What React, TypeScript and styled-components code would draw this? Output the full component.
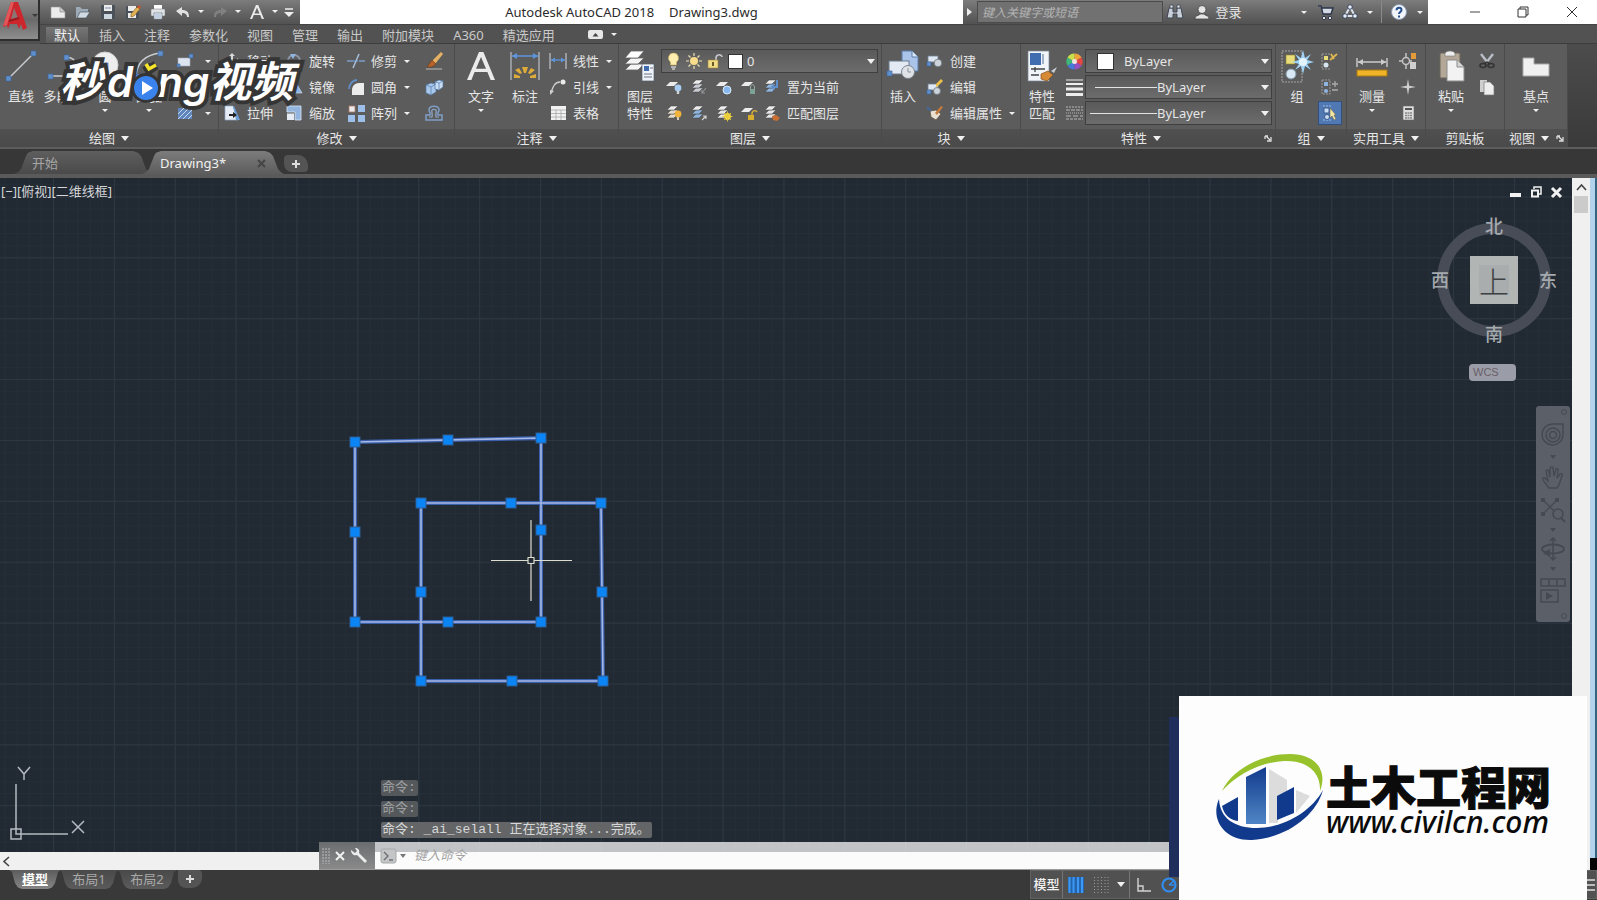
import React from "react";
import styled, { createGlobalStyle } from "styled-components";

const UI = `"Noto Sans", "Noto Sans CJK SC", sans-serif`;

const GlobalStyle = createGlobalStyle`
  *, *::before, *::after { box-sizing: border-box; }
  html, body { margin: 0; padding: 0; }
  body { background: #3a3a3a; color: #e6e6e6; font-family: ${UI}; font-size: 13px; line-height: 17px; overflow: hidden; }
  button, input, select { font: inherit; color: inherit; margin: 0; padding: 0; border: 0; background: none; border-radius: 0; }
  svg { display: block; flex: none; overflow: visible; }
`;

/* ---------- page frame ---------- */

const Page = styled.div`
  position: relative;
  display: flex;
  flex-direction: column;
  min-height: 100vh;
`;

const Header = styled.header`
  display: grid;
  grid-template-columns: 40px minmax(0, 1fr);
  grid-template-rows: 24px 20px;
  background: #505050;
`;

const AppButton = styled.button`
  grid-row: 1 / span 2;
  height: 41px;
  display: flex;
  align-items: center;
  gap: 3px;
  padding: 0 0 8px 2px;
  background: linear-gradient(#8c8c8c, #6a6a6a 50%, #8e8e8e);
  border-right: 2px solid #2e2e2e;
  border-bottom: 2px solid #2e2e2e;
`;

const TitleBar = styled.div`
  display: flex;
  background: #ffffff;
`;

const metal = `linear-gradient(#7c7c7c, #6a6a6a 40%, #525252)`;

const QuickAccess = styled.div`
  display: flex;
  flex: none;
  width: 260px;
  padding-left: 5px;
  background: ${metal};
`;

const BarButton = styled.button<{ $w: number }>`
  display: flex;
  align-items: center;
  justify-content: center;
  width: ${(p) => p.$w}px;
  height: 23px;
`;

const WindowTitle = styled.h1`
  flex: 1;
  margin: 0;
  display: flex;
  justify-content: center;
  align-items: center;
  gap: 15px;
  color: #2b2b2b;
  font-size: 13px;
  font-weight: 400;
  white-space: nowrap;
`;

const InfoCenter = styled.div`
  display: flex;
  align-items: center;
  flex: none;
  width: 465px;
  background: ${metal};
`;

const SearchInput = styled.input`
  width: 187px;
  height: 22px;
  padding: 0 4px;
  background: #717171;
  border: 1px solid #4b4b4b;
  font-size: 12px;
  font-style: italic;
  &::placeholder { color: #b4b4b4; opacity: 1; }
`;

const SignIn = styled.button`
  display: flex;
  align-items: center;
  gap: 6px;
  width: 110px;
  padding-left: 7px;
  height: 23px;
`;

const BarDivider = styled.span`
  width: 1px;
  height: 22px;
  margin: 0 4px;
  background: #8a8a8a;
`;

const WindowControls = styled.div`
  display: flex;
  flex: none;
  width: 169px;
  padding-left: 23px;
`;

const Tabs = styled.nav`
  display: flex;
  gap: 3px;
  padding: 2px 0 0 6px;
  background: #525252;
  border-bottom: 1px solid #3d3d3d;
  border-top: 1px solid #444444;
`;

const Tab = styled.button<{ $active?: boolean }>`
  padding: 0 8px;
  height: 16px;
  line-height: 16px;
  white-space: nowrap;
  color: ${(p) => (p.$active ? "#f2f2f2" : "#c9c9c9")};
  background: ${(p) => (p.$active ? "linear-gradient(#767676, #5e5e5e)" : "none")};
`;

const TabExtra = styled.button`
  display: flex;
  align-items: center;
  gap: 8px;
  margin-left: 22px;
  height: 15px;
`;

/* ---------- ribbon ---------- */

const Ribbon = styled.section`
  display: flex;
  height: 105px;
  background: linear-gradient(#4c4c4c, #3a3a3a);
  border-bottom: 2px solid #5d5d5d;
`;

const Panel = styled.div<{ $w: number }>`
  display: flex;
  flex-direction: column;
  flex: none;
  width: ${(p) => p.$w}px;
  background: #5c5c5c;
  border-right: 1px solid #4b4b4b;
`;

const PanelBody = styled.div<{ $inset?: number }>`
  display: flex;
  flex: none;
  height: 85px;
  padding: 4px 0 0 ${(p) => p.$inset ?? 0}px;
`;

const PanelTitle = styled.div<{ $launcher?: boolean }>`
  position: relative;
  display: flex;
  align-items: center;
  justify-content: center;
  gap: 6px;
  height: 18px;
  padding-right: ${(p) => (p.$launcher ? 14 : 0)}px;
  background: linear-gradient(#505050, #4a4a4a);
`;

const Launcher = styled.button`
  position: absolute;
  right: 3px;
  top: 6px;
`;

const BigButton = styled.button<{ $w?: number }>`
  display: flex;
  flex-direction: column;
  align-items: center;
  flex: none;
  width: ${(p) => p.$w ?? 42}px;
  padding-top: 2px;
  white-space: pre-line;
  text-align: center;
`;

const BigLabel = styled.span`
  padding-top: 6px;
`;

const BigCaret = styled.span`
  padding-top: 4px;
`;

const Column = styled.div<{ $gapLeft?: number }>`
  display: flex;
  flex-direction: column;
  flex: none;
  margin-left: ${(p) => p.$gapLeft ?? 0}px;
`;

const ToolRow = styled.div`
  display: flex;
  align-items: center;
  height: 26px;
`;

const Tool = styled.button<{ $on?: boolean }>`
  display: flex;
  align-items: center;
  gap: 4px;
  height: 24px;
  white-space: nowrap;
  background: ${(p) => (p.$on ? "#5079b4" : "none")};
  box-shadow: ${(p) => (p.$on ? "inset 0 0 0 1px #33507c" : "none")};
`;

const ToolIcon = styled.span<{ $w?: number }>`
  display: flex;
  justify-content: center;
  flex: none;
  width: ${(p) => p.$w ?? 22}px;
`;

const CaretButton = styled.button`
  display: flex;
  justify-content: center;
  width: 12px;
  margin-left: 4px;
  padding: 8px 0;
`;

const CaretMark = styled.span<{ $big?: boolean; $dark?: boolean }>`
  display: block;
  width: 0;
  height: 0;
  border: solid transparent;
  border-width: ${(p) => (p.$big ? "5px 4px 0" : "3px 3px 0")};
  border-top-color: ${(p) => (p.$dark ? "#3a3a3a" : "#f0f0f0")};
`;

const Combo = styled.label<{ $w: number }>`
  position: relative;
  display: block;
  width: ${(p) => p.$w}px;
  height: 24px;
  background: linear-gradient(#5a5a5a, #6c6c6c);
  border: 1px solid #3f3f3f;
`;

const ComboSelect = styled.select<{ $text: number }>`
  appearance: none;
  width: 100%;
  height: 22px;
  padding-left: ${(p) => p.$text}px;
  outline: none;
`;

const ComboArt = styled.span<{ $left: number }>`
  position: absolute;
  left: ${(p) => p.$left}px;
  top: 0;
  height: 22px;
  display: flex;
  align-items: center;
  gap: 5px;
  pointer-events: none;
`;

const ComboCaret = styled.span`
  position: absolute;
  right: 2px;
  top: 9px;
  pointer-events: none;
`;

const Swatch = styled.span<{ $s: number }>`
  width: ${(p) => p.$s}px;
  height: ${(p) => p.$s}px;
  background: #ffffff;
  border: 1px solid #333333;
`;

const Rule = styled.span<{ $w: number }>`
  width: ${(p) => p.$w}px;
  height: 1px;
  background: #e4e4e4;
`;

/* ---------- document tabs ---------- */

const DocTabs = styled.nav`
  display: flex;
  align-items: flex-end;
  height: 29px;
  padding-left: 14px;
  background: #373737;
  border-bottom: 4px solid #5a5a5a;
`;

const DocTab = styled.div<{ $active?: boolean }>`
  display: flex;
  align-items: center;
  justify-content: space-between;
  width: ${(p) => (p.$active ? 142 : 138)}px;
  height: 23px;
  margin-left: ${(p) => (p.$active ? -10 : 0)}px;
  padding: 2px 18px 0 18px;
  color: ${(p) => (p.$active ? "#f2f2f2" : "#a6a6a6")};
  background: ${(p) => (p.$active ? "linear-gradient(#7c7c7c, #5c5c5c)" : "linear-gradient(#5e5e5e, #4a4a4a)")};
  clip-path: polygon(0 100%, 4px 92%, 7px 78%, 12px 22%, 14px 8%, 19px 0, calc(100% - 19px) 0, calc(100% - 14px) 8%, calc(100% - 11px) 22%, calc(100% - 6px) 78%, calc(100% - 3px) 92%, 100% 100%);
`;

const AddTab = styled.button<{ $flip?: boolean }>`
  display: flex;
  align-items: center;
  justify-content: center;
  width: 24px;
  height: ${(p) => (p.$flip ? 18 : 17)}px;
  margin-bottom: ${(p) => (p.$flip ? 0 : 2)}px;
  margin-left: ${(p) => (p.$flip ? 3 : 0)}px;
  background: #545454;
  border-radius: ${(p) => (p.$flip ? "0 4px 10px 8px" : "4px 10px 4px 8px")};
`;

/* ---------- workspace ---------- */

const Workspace = styled.main`
  position: relative;
  display: flex;
  flex: 1;
  min-height: 480px;
`;

const Stage = styled.div`
  display: flex;
  flex-direction: column;
  flex: 1;
  min-width: 0;
`;

const Canvas = styled.div`
  position: relative;
  flex: 1;
  background: #212932;
  overflow: hidden;
`;

const Drawing = styled.svg`
  position: absolute;
  inset: 0;
  width: 100%;
  height: 100%;
`;

const ViewLabel = styled.div`
  position: relative;
  display: flex;
  padding: 5px 0 0 1px;
  color: #d4d6d8;
`;

const Ucs = styled.svg`
  position: absolute;
  left: 10px;
  bottom: 12px;
`;

const ViewportControls = styled.div`
  position: absolute;
  top: 8px;
  right: 10px;
  display: flex;
  gap: 9px;
`;

const Compass = styled.div`
  position: absolute;
  top: 37px;
  right: 14px;
  width: 128px;
  height: 130px;
  display: grid;
  grid-template-columns: 20px 1fr 20px;
  grid-template-rows: 22px 1fr 22px;
  place-items: center;
  color: #a5aaaf;
  font-size: 18px;
  line-height: 22px;
`;

const Ring = styled.span`
  position: absolute;
  left: 7px;
  top: 8px;
  width: 114px;
  height: 114px;
  border: 11px solid #474c56;
  border-radius: 50%;
`;

const Heading = styled.span<{ $area: string }>`
  position: relative;
  grid-area: ${(p) => p.$area};
  font-weight: 500;
`;

const TopFace = styled.button`
  position: relative;
  grid-area: 2 / 2;
  width: 48px;
  height: 48px;
  background: #a9adad;
  box-shadow: inset 0 0 0 9px #b1b5b4;
  color: #3e4143;
  font-size: 30px;
  font-family: "Noto Sans CJK SC", sans-serif;
  font-weight: 300;
  line-height: 44px;
`;

const WcsButton = styled.button`
  position: absolute;
  top: 186px;
  right: 56px;
  width: 47px;
  height: 17px;
  padding-left: 4px;
  display: flex;
  align-items: center;
  border-radius: 4px;
  background: #9a9da8;
  color: #6b6069;
  font-family: "Liberation Sans", sans-serif;
  font-size: 11px;
`;

const NavBar = styled.div`
  position: absolute;
  top: 228px;
  right: 2px;
  width: 34px;
  height: 216px;
  padding-top: 12px;
  display: flex;
  flex-direction: column;
  align-items: center;
  border-radius: 3px;
  background: #5a5f68;
`;

const NavButton = styled.button<{ $h: number }>`
  display: flex;
  align-items: center;
  justify-content: center;
  width: 34px;
  height: ${(p) => p.$h}px;
`;

const NavDot = styled.span<{ $end?: boolean }>`
  position: absolute;
  right: 3px;
  ${(p) => (p.$end ? "bottom: 3px;" : "top: 3px;")}
  width: 6px;
  height: 6px;
  border: 1px solid #464a52;
  border-radius: 50%;
`;

const History = styled.div`
  position: absolute;
  left: 381px;
  bottom: 14px;
  display: flex;
  flex-direction: column;
  align-items: flex-start;
  gap: 5px;
  font-family: "Liberation Mono", "Noto Sans CJK SC", monospace;
`;

const HistoryLine = styled.div<{ $dim?: boolean }>`
  height: 16px;
  line-height: 15px;
  padding: 0 2px 0 1px;
  border-radius: 2px;
  white-space: pre;
  background: ${(p) => (p.$dim ? "#55585a" : "#636566")};
  color: ${(p) => (p.$dim ? "#9da0a2" : "#d6d7d8")};
`;

const HScroll = styled.div`
  display: flex;
  align-items: center;
  height: 18px;
  padding-left: 3px;
  background: #f0f0f0;
`;

const VScroll = styled.div`
  display: flex;
  flex-direction: column;
  align-items: center;
  width: 18px;
  background: #f0f0f0;
`;

const VThumb = styled.span`
  width: 14px;
  height: 17px;
  background: #cbcbcb;
`;

const ScrollButton = styled.button`
  display: flex;
  align-items: center;
  justify-content: center;
  height: 18px;
`;

const WindowEdge = styled.span`
  width: 7px;
  background: linear-gradient(90deg, #b3d3ec 5px, #34647f 5px);
  border-bottom: 12px solid #050505;
`;

const CommandBar = styled.form`
  position: absolute;
  left: 319px;
  right: 26px;
  bottom: 0;
  height: 28px;
  display: flex;
  background: rgba(255, 255, 255, 0.72);
  border-bottom: 1px solid #9a9a9a;
`;

const CommandTools = styled.div`
  display: flex;
  align-items: center;
  width: 56px;
  padding-left: 3px;
  gap: 5px;
  background: linear-gradient(#6a6d6f, #8a8a8a);
`;

const Prompt = styled.button`
  display: flex;
  align-items: center;
  gap: 4px;
  padding-left: 6px;
`;

const CommandInput = styled.input`
  flex: 1;
  padding-left: 8px;
  font-style: italic;
  outline: none;
  &::placeholder { color: #a3a3a3; opacity: 1; }
`;

/* ---------- status bar ---------- */

const StatusBar = styled.footer`
  display: flex;
  align-items: flex-start;
  height: 30px;
  padding-left: 9px;
  background: #393939;
`;

const LayoutTab = styled.button<{ $active?: boolean }>`
  width: ${(p) => (p.$active ? 52 : 60)}px;
  height: 19px;
  margin-right: -2px;
  line-height: 17px;
  font-weight: ${(p) => (p.$active ? 700 : 400)};
  text-decoration: ${(p) => (p.$active ? "underline" : "none")};
  color: ${(p) => (p.$active ? "#ffffff" : "#a9a9a9")};
  background: ${(p) => (p.$active ? "linear-gradient(#5c5c5c, #858585)" : "linear-gradient(#494949, #5b5b5b)")};
  clip-path: polygon(0 0, 3px 10%, 6px 70%, 9px 92%, 13px 100%, calc(100% - 13px) 100%, calc(100% - 9px) 92%, calc(100% - 6px) 70%, calc(100% - 3px) 10%, 100% 0);
`;

const StatusTools = styled.div`
  display: flex;
  align-items: center;
  width: 567px;
  height: 29px;
  margin-left: auto;
  background: #515151;
  border: 1px solid #626262;
`;

const StatusButton = styled.button<{ $w: number; $divide?: boolean }>`
  display: flex;
  align-items: center;
  justify-content: center;
  width: ${(p) => p.$w}px;
  height: 27px;
  color: #f2f2f2;
  font-weight: 500;
  border-right: ${(p) => (p.$divide ? "1px solid #757575" : "0")};
`;

const StatusMenu = styled(StatusButton)`
  margin-left: auto;
`;

/* ---------- overlaid marks ---------- */

const VideoMark = styled.div`
  position: absolute;
  left: 60px;
  top: 55px;
  display: flex;
  align-items: flex-start;
  font-family: "Noto Sans CJK SC", sans-serif;
  font-size: 42px;
  font-weight: 700;
  font-style: italic;
  line-height: 48px;
  color: #ffffff;
  -webkit-text-stroke: 8px #353535;
  paint-order: stroke fill;
  pointer-events: none;
`;

const MarkLead = styled.span`
  margin-right: 5px;
`;

const MarkLatin = styled.span`
  padding-top: 3px;
  font-family: "Inter", sans-serif;
  font-size: 42px;
  font-weight: 600;
`;

const MarkPlay = styled.svg`
  position: relative;
  z-index: 1;
`;

const SiteCard = styled.aside`
  position: absolute;
  right: 10px;
  bottom: 0;
  width: 408px;
  height: 204px;
  display: flex;
  align-items: center;
  padding-left: 35px;
  gap: 2px;
  background: #fdfdfd;
  color: #0b0b0b;
`;

const SiteShadow = styled.span`
  position: absolute;
  right: 418px;
  bottom: 23px;
  width: 10px;
  height: 160px;
  background: #202e5c;
`;

const SiteText = styled.div`
  display: flex;
  flex-direction: column;
  padding-top: 3px;
  white-space: nowrap;
`;

const SiteName = styled.strong`
  font-family: "Noto Sans CJK SC", sans-serif;
  font-size: 45px;
  font-weight: 900;
  font-style: oblique 6deg;
  line-height: 44px;
  -webkit-text-stroke: 1px #0b0b0b;
`;

const SiteUrl = styled.a`
  font-size: 30px;
  font-style: italic;
  font-weight: 500;
  line-height: 28px;
  color: inherit;
  text-decoration: none;
`;

/* ---------- icons ---------- */

type IconProps = { children: React.ReactNode; s?: number; h?: number };
const Icon = ({ children, s = 16, h }: IconProps) => (
  <svg width={s} height={h ?? s} viewBox={`0 0 ${s} ${h ?? s}`} fill="none" aria-hidden="true">
    {children}
  </svg>
);

const W = "#ececec";
const B = "#8fb4e0";
const grip = (x: number, y: number, s = 5) => (
  <rect x={x} y={y} width={s} height={s} fill="#5f8fcb" stroke="#3d659b" strokeWidth=".6" />
);

const Plus = () => <Icon s={10}><path d="M5 1v8M1 5h8" stroke="#dddddd" strokeWidth="2" /></Icon>;
const Cross = ({ c = "#e8e8e8", s = 10, w = 2 }: { c?: string; s?: number; w?: number }) => (
  <Icon s={s}><path d={`M1 1L${s - 1} ${s - 1}M${s - 1} 1L1 ${s - 1}`} stroke={c} strokeWidth={w} /></Icon>
);
const LauncherIcon = () => <Icon s={7}><path d="M0 1h3M0 1v3M1 1l4 4M6 2v4H2" stroke="#dedede" strokeWidth="1.300" /></Icon>;

const LogoA = () => (
  <svg width="27" height="30" viewBox="0 0 27 30" aria-hidden="true">
    <path d="M9 1h7l9 26-4 2-2-6-2 5-2-5H8l-2 5-1-4-3 2-1-1z" fill="#cb272d" />
    <path d="M9 1h3L5 24l-4 1z" fill="#e2565a" />
    <path d="M12 7l4 10-7 1z" fill="#8d7474" />
    <path d="M7 20l10-3" stroke="#9a1a20" strokeWidth="2" />
  </svg>
);

const NewFile = () => <Icon><path d="M1 3h9l5 5v6H1z" fill={W} stroke="#999" strokeWidth=".6" /><path d="M10 3v5h5" fill="#c9c9c9" stroke="#888" strokeWidth=".6" /></Icon>;
const OpenFile = () => <Icon><path d="M1 3h4l2 2h6v3H5l-3 6H1z" fill="#9dabb8" /><path d="M5 8h10l-4 6H2z" fill="#cfdae4" stroke="#3f474e" strokeWidth=".6" /></Icon>;
const SaveFile = () => <Icon><rect x="1" y="1" width="14" height="14" rx="1" fill="#4b5158" /><rect x="4" y="1" width="8" height="6" fill={W} /><rect x="4" y="10" width="8" height="5" fill="#cdd7e0" /><path d="M5 4h6" stroke="#7a8fae" /></Icon>;
const SaveAs = () => <Icon><rect x="1" y="2" width="13" height="13" rx="1" fill="#4b5158" /><rect x="3" y="2" width="8" height="5" fill={W} /><rect x="3" y="9" width="8" height="5" fill={W} /><path d="M6 10l6-7 3 2-6 7-3 1z" fill="#e1b256" stroke="#7c5a1c" strokeWidth=".6" /><path d="M12 3l2-2 2 2-1 2z" fill="#c8532d" /></Icon>;
const Print = () => <Icon><rect x="4" y="1" width="8" height="5" fill="#fff" /><rect x="1" y="5" width="14" height="7" rx="1" fill="#dfe3e6" stroke="#777" strokeWidth=".5" /><rect x="4" y="9" width="8" height="6" fill="#fff" stroke="#708090" strokeWidth=".8" /><path d="M5 11h6M5 13h6" stroke="#6488b6" strokeWidth=".8" /></Icon>;
const Undo = ({ off }: { off?: boolean }) => (
  <Icon><g transform={off ? "matrix(-1 0 0 1 16 0)" : undefined}><path d="M1 7l6-4v3c5 0 7 2 7 7h-2c0-3-2-4-5-4v3z" fill={off ? "#808080" : "#e2e2e2"} /></g></Icon>
);
const StyleA = ({ s = 16 }: { s?: number }) => (
  <svg width={s} height={s} viewBox="0 0 16 16" aria-hidden="true"><path d="M7 1h2.200L15 15h-2.200L11.200 11H4.800L3.200 15H1zM8 3.500L5.500 9.400h5z" fill="#ebebeb" fillRule="evenodd" /></svg>
);
const MoreIcon = () => <Icon s={10}><path d="M1 2h8" stroke="#eee" strokeWidth="1.500" /><path d="M0 5h10l-5 5z" fill="#eee" /></Icon>;
const Binoculars = () => <Icon><path d="M2 4h4v4h4V4h4l2 10h-6v-4H6v4H0z" fill="#c9cfd9" stroke="#3d4452" strokeWidth="1" /><path d="M3 1h3v3H3zM10 1h3v3h-3z" fill="#e7eaf0" stroke="#3d4452" strokeWidth=".8" /></Icon>;
const User = () => <Icon><circle cx="8" cy="5.500" r="4" fill="#e4e4e4" stroke="#444" strokeWidth=".8" /><path d="M1 15c0-4 4-3 5-5h4c1 2 5 1 5 5z" fill="#e4e4e4" stroke="#444" strokeWidth=".8" /></Icon>;
const Cart = () => <Icon><path d="M1 2h3l2 8h8l2-6H5" fill="#d3dae6" stroke="#2b3448" strokeWidth="1.400" /><circle cx="7" cy="14" r="1.600" fill="#fff" stroke="#2b3448" /><circle cx="13" cy="14" r="1.600" fill="#fff" stroke="#2b3448" /></Icon>;
const A360 = () => <Icon><path d="M8 3L3 12h10z" stroke="#dbe4f0" strokeWidth="2" /><circle cx="8" cy="3" r="2.300" fill="#e8eef7" stroke="#36445e" /><circle cx="3" cy="12" r="2.300" fill="#e8eef7" stroke="#36445e" /><circle cx="13" cy="12" r="2.300" fill="#e8eef7" stroke="#36445e" /></Icon>;
const Help = () => <Icon><circle cx="8" cy="8" r="7.500" fill="#f2f5fa" stroke="#8c9bb2" /><path d="M5.500 6.200c0-3.400 5-3.200 5-.2 0 2-2.500 2-2.500 4M8 11.500v2" stroke="#27508f" strokeWidth="2" /></Icon>;
const RibbonToggle = () => <Icon s={15} h={9}><rect width="15" height="9" rx="2" fill="#e8e8e8" /><path d="M4.500 6.500l3-3.500 3 3.500z" fill="#444" /></Icon>;
const MinIcon = () => <Icon s={12}><path d="M1 6h10" stroke="#444" strokeWidth="1" /></Icon>;
const RestoreIcon = () => <Icon s={12}><path d="M3 3V1h8v8H9M1 3h8v8H1z" stroke="#333" /></Icon>;

const LineIcon = () => <Icon s={32}><path d="M4 28L28 4" stroke="#c9ccd0" strokeWidth="1.500" />{grip(1, 26)}{grip(26, 1)}</Icon>;
const PolyIcon = () => <Icon s={32}><path d="M4 26h24C34 12 24 6 20 8" stroke="#c9ccd0" strokeWidth="1.500" />{grip(1, 24)}{grip(17, 5)}</Icon>;
const CircleIcon = () => <Icon s={32}><circle cx="16" cy="15" r="13" fill="#eeeeee" stroke="#cfcfcf" />{grip(14, 13)}</Icon>;
const ArcIcon = () => <Icon s={32}><path d="M3 26C4 12 12 5 27 3" stroke="#c9ccd0" strokeWidth="1.500" />{grip(25, 1)}{grip(1, 24)}</Icon>;
const RectIcon = () => <Icon><rect x="1" y="5" width="12" height="8" fill="#dbe4ef" stroke="#aab" strokeWidth=".6" />{grip(12, 1, 4)}{grip(0, 11, 3)}</Icon>;
const EllipseIcon = () => <Icon><ellipse cx="8" cy="8" rx="7" ry="4" stroke="#d8d8d8" />{grip(6, 6, 4)}</Icon>;
const HatchIcon = () => <Icon><rect x="1" y="3" width="14" height="11" fill="#5f86bd" /><path d="M1 9l6-6M1 14L12 3M6 14l9-9M11 14l4-4" stroke="#c8dbf3" /></Icon>;

const MoveIcon = () => <Icon><path d="M8 0l3 3H9v4h4V5l3 3-3 3V9H9v4h2l-3 3-3-3h2V9H3v2L0 8l3-3v2h4V3H5z" fill="#d9d9d9" /></Icon>;
const RotateIcon = () => <Icon><circle cx="8" cy="8" r="6" stroke="#8a94a3" strokeWidth="2" /><path d="M4 1h6L7 6z" fill={B} /></Icon>;
const TrimIcon = () => <Icon s={18}><path d="M0 9h6M12 9h6" stroke="#7f9dc4" strokeWidth="1.500" /><path d="M6 9h5" stroke="#5f8fcb" strokeWidth="1.500" strokeDasharray="2 1" /><path d="M6 16L12 2" stroke="#a9bfdb" strokeWidth="1.500" /></Icon>;
const EraseIcon = () => <Icon s={18}><path d="M1 17h16" stroke="#9c9c9c" strokeWidth="1.500" /><path d="M16 0l2 2-8 10-3-3z" fill="#e7b264" /><path d="M7 8l4 4-4 3-5 0z" fill="#b5632b" stroke="#6d3512" strokeWidth=".6" /></Icon>;
const CopyIcon = () => <Icon><circle cx="6" cy="6" r="4" stroke={W} /><circle cx="10" cy="10" r="4" stroke={B} /></Icon>;
const MirrorIcon = () => <Icon><path d="M6 2v12H0z" fill="#7d8794" /><path d="M9 2v12h7z" fill={B} stroke="#dceafb" strokeWidth=".6" /></Icon>;
const FilletIcon = () => <Icon s={17}><path d="M4 16V11c0-4 3-7 7-7h5v12z" fill={W} /><path d="M1 10c0-5 4-9 8-9" stroke="#5f8fcb" strokeWidth="1.800" /></Icon>;
const ExplodeIcon = () => <Icon s={18}><path d="M1 7l5-2 5 1v8l-5 3-5-2z" fill="#a9c8ea" stroke="#50739f" strokeWidth=".7" /><path d="M10 4l4-2 4 1v6l-4 3-4-1z" fill="#c9def5" stroke="#50739f" strokeWidth=".7" /><path d="M1 7l5 2 5-3M6 9v7M10 4l4 1 4-2M14 5v6" stroke="#5c84b4" strokeWidth=".8" /></Icon>;
const StretchIcon = () => <Icon><path d="M1 1h8l5 14H1z" fill="#e6edf6" stroke="#8ca7c7" strokeWidth=".7" /><path d="M9 1h1l6 14h-4z" fill="#6f9cd3" /><path d="M5 9h4V7l4 3-4 3v-2H5z" fill="#222" /></Icon>;
const ScaleIcon = () => <Icon><path d="M1 1h14v14H9V7H1z" fill="#94b5df" stroke="#dbe8f7" strokeWidth=".8" /><rect x="1" y="8.500" width="7" height="6.500" fill="#e6ecf5" /></Icon>;
const ArrayIcon = () => <Icon s={17}><rect x="1" y="1" width="6" height="6" fill="#ececec" stroke="#ad7c69" strokeWidth=".8" /><rect x="10" y="0" width="7" height="7" fill="#9bbfe9" /><rect x="0" y="10" width="7" height="7" fill="#9bbfe9" /><rect x="10" y="10" width="7" height="7" fill="#9bbfe9" /></Icon>;
const OffsetIcon = () => <Icon s={18}><path d="M1 16v-5h4c1-2-1-3-1-5 0-5 10-5 10 0 0 2-2 3-1 5h4v5z" stroke="#7f9ec6" strokeWidth="1.500" /><path d="M4 13h3c1-3-1-5 0-7 1-1 3-1 4 0 1 2-1 4 0 7h3" stroke="#8fa9c8" strokeWidth="1.200" /></Icon>;

const DimIcon = () => <Icon s={32}><path d="M2 2v28M30 2v28" stroke="#a7abb0" strokeWidth="1.500" /><path d="M3 6h26" stroke="#5c95dc" strokeWidth="1.500" /><path d="M3 6l5-3v6zM29 6l-5-3v6z" fill="#5c95dc" /><g fill="#dcab3a"><path d="M13 17h6l-2 6h-2zM6 20l4-2 3 5-2 1zM26 20l-4-2-3 5 2 1zM5 28v-4l6 2v2zM27 28v-4l-6 2v2z" /></g></Icon>;
const LinearIcon = () => <Icon s={18}><path d="M1 1v16M17 1v16" stroke="#b9bcc0" strokeWidth="1.300" /><path d="M2 8h14" stroke="#5c95dc" strokeWidth="1.300" /><path d="M2 8l4-2.500v5zM16 8l-4-2.500v5z" fill="#5c95dc" /></Icon>;
const LeaderIcon = () => <Icon s={18}><path d="M2 15C4 8 6 4 11 4" stroke="#cfcfcf" strokeWidth="1.300" /><path d="M1 12l4 1-4 4z" fill="#cfcfcf" /><circle cx="14" cy="4" r="2.500" fill={W} /></Icon>;
const TableIcon = () => <Icon><rect x="1" y="1" width="15" height="14" fill="#f2f2f2" /><path d="M1 5h15M1 8.500h15M1 12h15M6 5v10M11 5v10" stroke="#a6a6a6" strokeWidth=".8" /></Icon>;

const sheets = (
  <>
    <path d="M1 20l6-6h13l-6 6z" fill="#f4f4f4" stroke="#666" strokeWidth=".8" />
    <path d="M1 14l6-6h13l-6 6z" fill="#f4f4f4" stroke="#666" strokeWidth=".8" />
    <path d="M1 8l6-7h13l-6 7z" fill="#ffffff" stroke="#666" strokeWidth=".8" />
  </>
);
const LayerPropsIcon = () => <Icon s={32}>{sheets}<rect x="18" y="14" width="12" height="17" fill="#eef3fa" stroke="#55606e" strokeWidth=".7" /><rect x="20" y="16" width="5" height="5" fill="#3f6db0" /><path d="M26 18h3M20 24h8M20 27h8" stroke="#6a7788" strokeWidth="1.200" /></Icon>;
const Bulb = () => <Icon s={15} h={18}><path d="M7.500 1a5 5 0 0 1 3 9v3h-6v-3a5 5 0 0 1 3-9z" fill="#ffeeb0" stroke="#c7a956" strokeWidth=".6" /><path d="M5 15h5M6 17h3" stroke="#c9c9c9" strokeWidth="1.300" /></Icon>;
const Sun = () => <Icon s={16}><circle cx="8" cy="8" r="4" fill="#f8dc8b" /><path d="M8 0v3M8 13v3M0 8h3M13 8h3M2.500 2.500l2 2M11.500 11.500l2 2M2.500 13.500l2-2M11.500 4.500l2-2" stroke="#f0dfb0" strokeWidth="1.200" /></Icon>;
const LockIcon = () => <Icon s={16}><path d="M9 7V5c0-4 6-4 6-1" stroke="#c9ced5" strokeWidth="1.500" /><rect x="1" y="7" width="10" height="8" fill="#f0dd8a" stroke="#9c8430" strokeWidth=".6" /><rect x="5" y="9" width="2" height="4" fill="#6a5a20" /></Icon>;

const one = <path d="M0 7l4-4h8L8 7z" fill={W} />;
const stack = (c: string) => <><path d="M1 13l4-4h7l-4 4z" fill={c} stroke="#444" strokeWidth=".5" /><path d="M1 9l4-4h7l-4 4z" fill={c} stroke="#444" strokeWidth=".5" /><path d="M1 5l4-4h7L8 5z" fill={W} stroke="#444" strokeWidth=".5" /></>;
const LayOff = () => <Icon>{one}<circle cx="12" cy="9" r="3.400" fill="#a7cdf3" /><rect x="10.800" y="12" width="2.400" height="3" fill="#d4d4d4" /></Icon>;
const LayIso = () => <Icon>{stack("#c9cdd3")}<path d="M15 9l-4 5M11 11v3h3" stroke="#8f9399" strokeWidth="1.200" /></Icon>;
const LayFreeze = () => <Icon>{one}<circle cx="11" cy="11" r="4" fill="#86b7ee" stroke="#dcebfb" /></Icon>;
const LayLock = () => <Icon>{one}<path d="M9.500 10V8c0-3 4-3 4 0v2" stroke="#93a9a2" /><rect x="9" y="10" width="5" height="5" fill="#7da293" /></Icon>;
const LayCurrent = () => <Icon>{stack(B)}<path d="M13 1v7H9" stroke="#5f8fcb" strokeWidth="2" /><path d="M10 4L7 8l3 3z" fill="#5f8fcb" /></Icon>;
const LayOn = () => <Icon>{stack("#e3dccb")}<circle cx="12" cy="9" r="3.400" fill="#f0b43a" /><rect x="11" y="12" width="2" height="3" fill="#d8cfb8" /></Icon>;
const LayUniso = () => <Icon>{stack(B)}<path d="M11 15l4-4M12 11h3v3" stroke="#d0d0d0" strokeWidth="1.200" /></Icon>;
const LayThaw = () => <Icon>{stack("#e4e4e4")}<circle cx="11.500" cy="11.500" r="3.400" fill="#f5da46" /><path d="M11.500 6.500v10M6.500 11.500h10M8 8l7 7M15 8l-7 7" stroke="#e9cb38" strokeWidth=".9" /></Icon>;
const LayUnlock = () => <Icon>{one}<path d="M11 11V8c1-3 4-3 5-1" stroke="#e4b534" strokeWidth="1.300" /><rect x="7" y="10" width="6" height="5" fill="#d9ad2e" /></Icon>;
const LayMatch = () => <Icon>{stack("#e4e4e4")}<path d="M8 11l4-1 4 3-3 3-4-1z" fill="#c96f32" /></Icon>;

const InsertIcon = () => <Icon s={32}><path d="M15 1h10l6 6v14H15z" fill="#a9c4e8" stroke="#5b7cab" /><path d="M25 1v6h6" fill="#dbe8f8" stroke="#5b7cab" /><rect x="2" y="11" width="20" height="13" fill="#e3eaf4" stroke="#6d7a8c" /><circle cx="21" cy="22" r="6.500" fill="#dfe3e8" stroke="#7c8590" /><path d="M21 18v4h3" stroke="#8b939d" />{grip(0, 21)}</Icon>;
const BlockNew = () => <Icon><rect x="1" y="3" width="10" height="6" fill="#dfe7f2" stroke="#6f8097" strokeWidth=".8" /><circle cx="11" cy="10" r="3.800" fill="#cdd3db" stroke="#6c737c" strokeWidth=".8" />{grip(0, 9, 4)}</Icon>;
const BlockEdit = () => <Icon><rect x="1" y="5" width="10" height="6" fill="#dfe7f2" stroke="#6f8097" strokeWidth=".8" /><circle cx="10" cy="12" r="3.500" fill="#cdd3db" stroke="#6c737c" strokeWidth=".8" /><path d="M9 5l5-5 2 2-5 5-2 1z" fill="#edc04c" />{grip(0, 11, 4)}</Icon>;
const BlockAttr = () => <Icon><path d="M3 6l6-1 5 4-5 6-5-3z" fill="#e9e2d2" stroke="#5d5546" strokeWidth=".8" /><path d="M8 8l6-7 2 1-6 8z" fill="#c27a3d" /><path d="M0 2l4 4" stroke="#48689a" strokeWidth="2" /></Icon>;

const PropsIcon = () => <Icon s={32}><rect x="2" y="1" width="21" height="30" fill="#f1f4f8" stroke="#7d8794" strokeWidth=".7" /><rect x="4" y="3" width="11" height="12" fill="#3f6db0" /><path d="M17 4v10" stroke="#9fb0c6" strokeWidth="2" /><path d="M5 19h14M5 25h8M9 17v5" stroke="#444" strokeWidth="1.300" /><path d="M15 24l7-3 5 4-6 6-6-2z" fill="#d68a36" stroke="#86511a" strokeWidth=".7" /><path d="M25 21l6-4-3 6z" fill="#c8cdd4" /></Icon>;
const Wheel = () => <Icon s={17}><g><path d="M8.500 8.500V.5a8 8 0 0 1 7 4z" fill="#f1a33a" /><path d="M8.500 8.500l7-4a8 8 0 0 1 0 8z" fill="#e5463f" /><path d="M8.500 8.500l7 4a8 8 0 0 1-7 4z" fill="#9750c4" /><path d="M8.500 8.500v8a8 8 0 0 1-7-4z" fill="#4779dd" /><path d="M8.500 8.500l-7 4a8 8 0 0 1 0-8z" fill="#40b77a" /><path d="M8.500 8.500l-7-4a8 8 0 0 1 7-4z" fill="#cddf4a" /></g><circle cx="8.500" cy="8.500" r="2.500" fill="#f2e7e0" /></Icon>;
const Weights = () => <Icon s={17}><path d="M0 1h17" stroke={W} /><path d="M0 5h17" stroke={W} strokeWidth="2" /><path d="M0 10h17" stroke={W} strokeWidth="3" /><path d="M0 15.500h17" stroke={W} strokeWidth="3" /></Icon>;
const Types = () => <Icon s={17}><g stroke="#b8b8b8"><path d="M0 2h17" strokeDasharray="2 1" /><path d="M0 5h17" strokeDasharray="4 1" /><path d="M0 8h17" strokeDasharray="1 1" /><path d="M0 11h17" strokeDasharray="5 2" /><path d="M0 14h17" strokeDasharray="3 1" /></g></Icon>;

const GroupIcon = () => <Icon s={32}><rect x="1" y="1" width="20" height="31" stroke="#a5a5a5" strokeDasharray="2 1" /><rect x="5" y="5" width="9" height="9" fill="#e9dc7a" stroke="#8c8138" strokeWidth=".6" /><circle cx="10" cy="24" r="5" fill="#d8e9f5" stroke="#7f95a5" /><path d="M22 0l2 8 6-4-4 6 7 2-7 2 4 6-6-4-2 8-2-8-6 4 4-6-7-2 7-2-4-6 6 4z" fill="#9fd2f7" /><circle cx="22" cy="12" r="4" fill="#e4f4ff" /></Icon>;
const Ungroup = () => <Icon s={18}><path d="M1 2h9M1 17h9M1 2v15" stroke="#9a9a9a" strokeDasharray="2 1" /><rect x="3" y="4" width="4" height="4" fill="#e9dc7a" /><circle cx="5" cy="13" r="2.500" fill="#d8e6ef" /><path d="M9 8l7-6M10 2l3 5" stroke="#dcb650" strokeWidth="1.800" /></Icon>;
const GroupEdit = () => <Icon s={18}><rect x="1" y="2" width="8" height="14" stroke="#9a9a9a" strokeDasharray="2 1" /><rect x="3" y="4" width="4" height="4" fill="#8fb4e0" /><circle cx="5" cy="13" r="2" fill="#8fb4e0" /><path d="M11 6h6M14 3v6M11 12h6" stroke="#aaaaaa" strokeWidth="1.300" /></Icon>;
const GroupSel = () => <Icon s={18}><path d="M2 2h8M2 16h8" stroke="#9dbbe2" strokeDasharray="2 1" /><rect x="3" y="4" width="5" height="5" fill="#c9dcf3" stroke="#3a5c8e" /><circle cx="6" cy="13" r="2.500" fill="#c9dcf3" stroke="#3a5c8e" /><path d="M9 4l6 7-2 0 2 4-2 1-2-4-2 2z" fill="#f2e6a0" stroke="#555" strokeWidth=".5" /></Icon>;
const MeasureIcon = () => <Icon s={32}><path d="M1 8v9M31 8v9M2 12h28" stroke="#cccccc" strokeWidth="1.400" /><path d="M2 12l5-3v6zM30 12l-5-3v6z" fill="#cccccc" /><rect x="1" y="20" width="30" height="6" fill="#f0b429" stroke="#a87a12" /></Icon>;
const QuickCalc = () => <Icon s={18}><circle cx="7" cy="9" r="3.500" stroke="#c4c4c4" strokeWidth="1.500" /><path d="M7 1v5M7 12v5M0 9h4M10 9h3" stroke="#c4c4c4" strokeWidth="1.500" /><rect x="12" y="1" width="5" height="6" fill="#e39a3b" /><rect x="11" y="10" width="6" height="7" fill="#cfcfcf" /></Icon>;
const PointIcon = () => <Icon><path d="M8 0l1.200 6.800L16 8l-6.800 1.200L8 16l-1.200-6.800L0 8l6.800-1.200z" fill="#cfcfcf" /></Icon>;
const CalcIcon = () => <Icon><rect x="3" y="1" width="11" height="14" fill="#dedede" stroke="#666" strokeWidth=".6" /><path d="M5 4h7" stroke="#555" strokeWidth="2" /><path d="M5 8h7M5 10.500h7M5 13h7" stroke="#888" strokeDasharray="2 .5" strokeWidth="1.300" /></Icon>;
const PasteIcon = () => <Icon s={32}><rect x="5" y="3" width="20" height="25" rx="1" fill="#b3a798" stroke="#6d6459" /><path d="M10 4c0-4 10-4 10 0v2H10z" fill="#eeeeee" stroke="#777" strokeWidth=".6" /><path d="M12 10h10l7 7v14H12z" fill="#f2f2f2" stroke="#8b8b8b" /><path d="M22 10v7h7" fill="#d5d5d5" stroke="#8b8b8b" /></Icon>;
const CutIcon = () => <Icon><path d="M2 1l7 9M14 1L7 10" stroke="#b9bec6" strokeWidth="2.400" /><path d="M8 9l-3 2M8 9l3 2" stroke="#333" strokeWidth="2" /><ellipse cx="4" cy="12.500" rx="3" ry="2" stroke="#333" strokeWidth="1.600" /><ellipse cx="12" cy="12.500" rx="3" ry="2" stroke="#333" strokeWidth="1.600" /></Icon>;
const CopyClip = () => <Icon><path d="M1 1h7v12H1z" fill="#cfcfcf" /><path d="M5 3h6l4 4v9H5z" fill="#eeeeee" stroke="#777" strokeWidth=".7" /></Icon>;
const BaseIcon = () => <Icon s={32}><path d="M3 8h11v6h15v12H3z" fill="#f0f0f0" stroke="#a8a8a8" /></Icon>;

const n = "#454a52";
const NavWheel = () => <Icon s={24}><path d="M12 1h10v11a10.500 10.500 0 1 1-10-11z" stroke={n} strokeWidth="1.500" /><circle cx="12" cy="12" r="7" stroke={n} strokeWidth="1.500" /><circle cx="12" cy="12" r="3.500" stroke={n} strokeWidth="1.500" /></Icon>;
const NavHand = () => <Icon s={24}><path d="M8 22C5 18 1 14 2 12c2-1 3 1 5 3L5 5c1-2 2-1 3 1l1 5V2c1-2 3-1 3 0l1 8 2-7c1-1 3 0 2 2l-1 7 3-4c2-1 3 0 2 2-2 4-2 9-5 12z" stroke={n} strokeWidth="1.400" /></Icon>;
const NavZoom = () => <Icon s={24}><path d="M2 2l12 12M16 2L2 16" stroke={n} strokeWidth="1.400" /><path d="M0 0h4v4H0zM14 0h4v4h-4zM0 14h4v4H0z" fill={n} /><circle cx="17" cy="16" r="5" stroke={n} strokeWidth="1.600" fill="#5a5f68" /><path d="M20 20l4 4" stroke={n} strokeWidth="2" /></Icon>;
const NavOrbit = () => <Icon s={24}><path d="M12 1v22M9 4l3-3 3 3M9 20l3 3 3-3" stroke={n} strokeWidth="1.500" /><ellipse cx="12" cy="12" rx="11" ry="4.500" stroke={n} strokeWidth="1.800" /><path d="M2 16l7-4v8z" fill={n} /></Icon>;
const NavMotion = () => <Icon s={24}><path d="M0 1h24v7H0zM8 1v7M16 1v7M0 12h17v12H0z" stroke={n} strokeWidth="1.500" /><path d="M5 14l7 4-7 4z" fill={n} /></Icon>;
const NavCaret = () => <Icon s={6} h={4}><path d="M0 0h6L3 4z" fill={n} /></Icon>;

/* ---------- parts ---------- */

type ToolDef = { icon: React.ReactNode; label?: string; menu?: boolean; on?: boolean; name?: string };

const Tools = ({ items, gapLeft, w }: { items: ToolDef[]; gapLeft?: number; w?: number }) => (
  <Column $gapLeft={gapLeft}>
    {items.map((t, i) => (
      <ToolRow key={i}>
        <Tool type="button" $on={t.on} aria-label={t.label ?? t.name}>
          <ToolIcon $w={w}>{t.icon}</ToolIcon>
          {t.label}
        </Tool>
        {t.menu && <CaretButton type="button" aria-label="展开"><CaretMark /></CaretButton>}
      </ToolRow>
    ))}
  </Column>
);

const Big = ({ icon, label, menu, w }: { icon: React.ReactNode; label: string; menu?: boolean; w?: number }) => (
  <BigButton type="button" $w={w}>
    {icon}
    <BigLabel>{label}</BigLabel>
    {menu && <BigCaret><CaretMark /></BigCaret>}
  </BigButton>
);

type PanelProps = { title: string; w: number; inset?: number; launcher?: boolean; noMenu?: boolean; children: React.ReactNode };
const RibbonPanel = ({ title, w, inset, launcher, noMenu, children }: PanelProps) => (
  <Panel $w={w}>
    <PanelBody $inset={inset}>{children}</PanelBody>
    <PanelTitle $launcher={launcher}>
      {title}
      {!noMenu && <CaretMark $big />}
      {launcher && <Launcher type="button" aria-label={title}><LauncherIcon /></Launcher>}
    </PanelTitle>
  </Panel>
);

const Select = ({ name, value, w, text, left, art }: { name: string; value: string; w: number; text: number; left: number; art: React.ReactNode }) => (
  <Combo $w={w}>
    <ComboSelect aria-label={name} $text={text} defaultValue={value}><option>{value}</option></ComboSelect>
    <ComboArt $left={left}>{art}</ComboArt>
    <ComboCaret><CaretMark $big /></ComboCaret>
  </Combo>
);

const tabNames = ["默认", "插入", "注释", "参数化", "视图", "管理", "输出", "附加模块", "A360", "精选应用"];

const grips: [number, number][] = [
  [355, 264], [448, 262], [541, 260], [355, 354], [541, 352], [355, 444], [448, 444], [541, 444],
  [421, 325], [511, 325], [601, 325], [421, 414], [602, 414], [421, 503], [512, 503], [603, 503],
];

const AppHeader = () => (
  <Header>
    <AppButton type="button" aria-label="应用程序菜单"><LogoA /><CaretMark $dark /></AppButton>
    <TitleBar>
      <QuickAccess>
        <BarButton $w={25} aria-label="新建"><NewFile /></BarButton>
        <BarButton $w={25} aria-label="打开"><OpenFile /></BarButton>
        <BarButton $w={25} aria-label="保存"><SaveFile /></BarButton>
        <BarButton $w={25} aria-label="另存为"><SaveAs /></BarButton>
        <BarButton $w={25} aria-label="打印"><Print /></BarButton>
        <BarButton $w={25} aria-label="放弃"><Undo /></BarButton>
        <BarButton $w={12} aria-label="放弃列表"><CaretMark /></BarButton>
        <BarButton $w={25} aria-label="重做"><Undo off /></BarButton>
        <BarButton $w={12} aria-label="重做列表"><CaretMark /></BarButton>
        <BarButton $w={25} aria-label="文字样式"><StyleA /></BarButton>
        <BarButton $w={12} aria-label="样式列表"><CaretMark /></BarButton>
        <BarButton $w={16} aria-label="自定义"><MoreIcon /></BarButton>
      </QuickAccess>
      <WindowTitle><span>Autodesk AutoCAD 2018</span><span>Drawing3.dwg</span></WindowTitle>
      <InfoCenter>
        <BarButton $w={14} aria-label="收拢"><Icon s={5} h={8}><path d="M0 0l5 4-5 4z" fill="#eee" /></Icon></BarButton>
        <SearchInput aria-label="搜索" placeholder="键入关键字或短语" />
        <BarButton $w={24} aria-label="查找"><Binoculars /></BarButton>
        <SignIn><User />登录</SignIn>
        <BarButton $w={16} aria-label="帐户"><CaretMark /></BarButton>
        <BarButton $w={26} aria-label="商店"><Cart /></BarButton>
        <BarButton $w={26} aria-label="应用"><A360 /></BarButton>
        <BarButton $w={14} aria-label="应用列表"><CaretMark /></BarButton>
        <BarDivider />
        <BarButton $w={26} aria-label="帮助"><Help /></BarButton>
        <BarButton $w={16} aria-label="帮助列表"><CaretMark /></BarButton>
      </InfoCenter>
      <WindowControls>
        <BarButton $w={48} aria-label="最小化"><MinIcon /></BarButton>
        <BarButton $w={48} aria-label="还原"><RestoreIcon /></BarButton>
        <BarButton $w={50} aria-label="关闭"><Cross c="#333" s={12} w={1} /></BarButton>
      </WindowControls>
    </TitleBar>
    <Tabs>
      {tabNames.map((t, i) => <Tab key={t} type="button" $active={i === 0}>{t}</Tab>)}
      <TabExtra type="button" aria-label="最小化功能区"><RibbonToggle /><CaretMark /></TabExtra>
    </Tabs>
  </Header>
);

const RibbonArea = () => (
  <Ribbon>
    <RibbonPanel title="绘图" w={219}>
      <Big icon={<LineIcon />} label="直线" />
      <Big icon={<PolyIcon />} label="多段线" />
      <Big icon={<CircleIcon />} label="圆" menu />
      <Big icon={<ArcIcon />} label="圆弧" menu w={46} />
      <Tools items={[{ icon: <RectIcon />, name: "矩形", menu: true }, { icon: <EllipseIcon />, name: "椭圆", menu: true }, { icon: <HatchIcon />, name: "图案填充", menu: true }]} w={26} />
    </RibbonPanel>
    <RibbonPanel title="修改" w={236} inset={2}>
      <Tools items={[{ icon: <MoveIcon />, label: "移动" }, { icon: <CopyIcon />, label: "复制" }, { icon: <StretchIcon />, label: "拉伸" }]} />
      <Tools gapLeft={10} items={[{ icon: <RotateIcon />, label: "旋转" }, { icon: <MirrorIcon />, label: "镜像" }, { icon: <ScaleIcon />, label: "缩放" }]} />
      <Tools gapLeft={10} items={[{ icon: <TrimIcon />, label: "修剪", menu: true }, { icon: <FilletIcon />, label: "圆角", menu: true }, { icon: <ArrayIcon />, label: "阵列", menu: true }]} />
      <Tools gapLeft={10} items={[{ icon: <EraseIcon />, name: "删除" }, { icon: <ExplodeIcon />, name: "分解" }, { icon: <OffsetIcon />, name: "偏移" }]} />
    </RibbonPanel>
    <RibbonPanel title="注释" w={164} inset={4}>
      <Big icon={<StyleA s={32} />} label="文字" menu w={44} />
      <Big icon={<DimIcon />} label="标注" w={44} />
      <Tools items={[{ icon: <LinearIcon />, label: "线性", menu: true }, { icon: <LeaderIcon />, label: "引线", menu: true }, { icon: <TableIcon />, label: "表格" }]} />
    </RibbonPanel>
    <RibbonPanel title="图层" w={263}>
      <Big icon={<LayerPropsIcon />} label={"图层\n特性"} />
      <Column>
        <ToolRow>
          <Select name="图层" value="0" w={217} text={85} left={4} art={<><Bulb /><Sun /><LockIcon /><Swatch $s={15} /></>} />
        </ToolRow>
        <ToolRow>
          {[<LayOff />, <LayIso />, <LayFreeze />, <LayLock />].map((ic, i) => (
            <Tool key={i} type="button" aria-label="图层工具"><ToolIcon $w={25}>{ic}</ToolIcon></Tool>
          ))}
          <Tool type="button"><ToolIcon $w={22}><LayCurrent /></ToolIcon>置为当前</Tool>
        </ToolRow>
        <ToolRow>
          {[<LayOn />, <LayUniso />, <LayThaw />, <LayUnlock />].map((ic, i) => (
            <Tool key={i} type="button" aria-label="图层工具"><ToolIcon $w={25}>{ic}</ToolIcon></Tool>
          ))}
          <Tool type="button"><ToolIcon $w={22}><LayMatch /></ToolIcon>匹配图层</Tool>
        </ToolRow>
      </Column>
    </RibbonPanel>
    <RibbonPanel title="块" w={139}>
      <Big icon={<InsertIcon />} label="插入" />
      <Tools items={[{ icon: <BlockNew />, label: "创建" }, { icon: <BlockEdit />, label: "编辑" }, { icon: <BlockAttr />, label: "编辑属性", menu: true }]} />
    </RibbonPanel>
    <RibbonPanel title="特性" w={255} launcher>
      <Big icon={<PropsIcon />} label={"特性\n匹配"} />
      <Tools items={[{ icon: <Wheel />, name: "颜色" }, { icon: <Weights />, name: "线宽" }, { icon: <Types />, name: "线型" }]} />
      <Column>
        <ToolRow><Select name="对象颜色" value="ByLayer" w={187} text={38} left={11} art={<Swatch $s={17} />} /></ToolRow>
        <ToolRow><Select name="对象线宽" value="ByLayer" w={187} text={71} left={9} art={<Rule $w={62} />} /></ToolRow>
        <ToolRow><Select name="对象线型" value="ByLayer" w={187} text={71} left={4} art={<Rule $w={67} />} /></ToolRow>
      </Column>
    </RibbonPanel>
    <RibbonPanel title="组" w={71}>
      <Big icon={<GroupIcon />} label="组" />
      <Tools w={24} items={[{ icon: <Ungroup />, name: "解除编组" }, { icon: <GroupEdit />, name: "组编辑" }, { icon: <GroupSel />, name: "组选择", on: true }]} />
    </RibbonPanel>
    <RibbonPanel title="实用工具" w={79}>
      <Big icon={<MeasureIcon />} label="测量" menu w={50} />
      <Tools items={[{ icon: <QuickCalc />, name: "快速选择" }, { icon: <PointIcon />, name: "点坐标" }, { icon: <CalcIcon />, name: "计算器" }]} />
    </RibbonPanel>
    <RibbonPanel title="剪贴板" w={79} noMenu>
      <Big icon={<PasteIcon />} label="粘贴" menu w={50} />
      <Tools items={[{ icon: <CutIcon />, name: "剪切" }, { icon: <CopyClip />, name: "复制" }]} />
    </RibbonPanel>
    <RibbonPanel title="视图" w={63} launcher>
      <Big icon={<BaseIcon />} label="基点" menu w={62} />
    </RibbonPanel>
  </Ribbon>
);

const Sheet = () => (
  <Drawing aria-label="绘图区">
    <defs>
      <pattern id="minor" width="12.174" height="12.174" x="53" y="18.500" patternUnits="userSpaceOnUse">
        <path d="M.5 0v12.174M0 .5h12.174" stroke="#252e38" strokeWidth="1" />
      </pattern>
      <pattern id="major" width="60.870" height="60.870" x="53" y="18.500" patternUnits="userSpaceOnUse">
        <path d="M.5 0v60.870M0 .5h60.870" stroke="#2d3742" strokeWidth="1" />
      </pattern>
    </defs>
    <rect width="100%" height="100%" fill="url(#minor)" />
    <rect width="100%" height="100%" fill="url(#major)" />
    <g fill="none" strokeLinejoin="round">
      <path d="M355 264L541 260V444H355ZM421 325H601L603 503H421Z" stroke="#3b60ab" strokeWidth="4" />
      <path d="M355 264L541 260V444H355ZM421 325H601L603 503H421Z" stroke="#a5b8e6" strokeWidth="1.600" />
      <path d="M491 382.500H528M534 382.500H572M531 342V379.500M531 385.500V423M528 379.500h6v6h-6z" stroke="#dcdccf" strokeWidth="1.200" />
    </g>
    {grips.map(([x, y]) => (
      <rect key={`${x}-${y}`} x={x - 5} y={y - 5} width="10" height="10" fill="#0b84f5" stroke="#2d5f96" strokeWidth="1" />
    ))}
  </Drawing>
);

const Viewport = () => (
  <Canvas>
    <Sheet />
    <ViewLabel><span>[−]</span><span>[俯视]</span><span>[二维线框]</span></ViewLabel>
    <ViewportControls>
      <button type="button" aria-label="最小化视口"><Icon s={12}><rect x="1" y="7" width="11" height="4" fill="#f2f2f2" /></Icon></button>
      <button type="button" aria-label="还原视口"><Icon s={12}><path d="M4 3V1h7v7H9" stroke="#f2f2f2" strokeWidth="1.500" /><rect x="2" y="4.500" width="6" height="6" stroke="#f2f2f2" strokeWidth="2" /></Icon></button>
      <button type="button" aria-label="关闭视口"><Cross c="#f2f2f2" s={11} w={3} /></button>
    </ViewportControls>
    <Compass>
      <Ring />
      <Heading $area="1 / 2">北</Heading>
      <Heading $area="2 / 1">西</Heading>
      <TopFace type="button">上</TopFace>
      <Heading $area="2 / 3">东</Heading>
      <Heading $area="3 / 2">南</Heading>
    </Compass>
    <WcsButton type="button">WCS</WcsButton>
    <NavBar>
      <NavDot />
      <NavButton $h={34} aria-label="控制盘"><NavWheel /></NavButton>
      <NavButton $h={10} aria-label="控制盘选项"><NavCaret /></NavButton>
      <NavButton $h={32} aria-label="平移"><NavHand /></NavButton>
      <NavButton $h={31} aria-label="范围缩放"><NavZoom /></NavButton>
      <NavButton $h={9} aria-label="缩放选项"><NavCaret /></NavButton>
      <NavButton $h={30} aria-label="动态观察"><NavOrbit /></NavButton>
      <NavButton $h={10} aria-label="动态观察选项"><NavCaret /></NavButton>
      <NavButton $h={32} aria-label="ShowMotion"><NavMotion /></NavButton>
      <NavDot $end />
    </NavBar>
    <Ucs width="76" height="76" viewBox="0 0 76 76" fill="none" stroke="#b4babf" strokeWidth="1.500">
      <path d="M1 65h10v10H1zM6 20v50h52" />
      <path d="M8 3l6 7 6-7M14 10v6M62 57l12 12M74 57L62 69" />
    </Ucs>
    <History>
      <HistoryLine $dim>命令:</HistoryLine>
      <HistoryLine $dim>命令:</HistoryLine>
      <HistoryLine>命令: _ai_selall 正在选择对象...完成。</HistoryLine>
    </History>
  </Canvas>
);

const CityLogo = () => (
  <svg width="110" height="90" viewBox="0 0 110 90" aria-hidden="true">
    <defs>
      <linearGradient id="tower" x1="0" y1="0" x2="0" y2="1">
        <stop offset="0" stopColor="#123a8c" />
        <stop offset="1" stopColor="#4f86c6" />
      </linearGradient>
    </defs>
    <path d="M8 38C18 17 46 1 76 1c26 0 38 17 30 37 1-18-12-31-36-30C46 9 22 22 8 38z" fill="#97c22b" />
    <path d="M5 46C-4 66 10 88 38 87c34-2 64-24 71-50-12 22-40 38-66 38C20 75 6 65 5 46z" fill="#123a8c" />
    <path d="M55 16l18 11v13l-9 5v25H55z" fill="#dcdcdc" />
    <path d="M82 37l14 6-14 17z" fill="#dcdcdc" />
    <path d="M8 53l16-9v24C16 67 10 62 8 53z" fill="#123a8c" />
    <path d="M32 24l20-10v57H32z" fill="url(#tower)" />
    <path d="M63 43l17-9v26l-17 7z" fill="#123a8c" />
  </svg>
);

export default function App() {
  return (
    <Page>
      <GlobalStyle />
      <AppHeader />
      <RibbonArea />
      <DocTabs>
        <DocTab>开始</DocTab>
        <DocTab $active>Drawing3*<button type="button" aria-label="关闭图形"><Cross c="#454545" s={9} w={2} /></button></DocTab>
        <AddTab type="button" aria-label="新图形"><Plus /></AddTab>
      </DocTabs>
      <Workspace>
        <Stage>
          <Viewport />
          <HScroll><ScrollButton type="button" aria-label="向左滚动"><Icon s={7} h={9}><path d="M6 0L1 4.500 6 9" stroke="#444" strokeWidth="1.600" /></Icon></ScrollButton></HScroll>
        </Stage>
        <VScroll>
          <ScrollButton type="button" aria-label="向上滚动"><Icon s={9} h={6}><path d="M0 6l4.500-5L9 6" stroke="#444" strokeWidth="1.600" /></Icon></ScrollButton>
          <VThumb />
        </VScroll>
        <WindowEdge />
        <CommandBar onSubmit={(e) => e.preventDefault()}>
          <CommandTools>
            <Icon s={8} h={18}><path d="M1 1v16M4 1v16M7 1v16" stroke="#b9b9b9" strokeDasharray="2 1" /></Icon>
            <button type="button" aria-label="关闭命令行"><Cross c="#f2f2f2" s={10} w={2} /></button>
            <button type="button" aria-label="自定义命令行"><Icon s={18}><path d="M1 3c0 4 3 6 6 5l8 8 2-2-8-8c1-3-1-5-4-5l2 3-2 2z" fill="#ececec" /></Icon></button>
          </CommandTools>
          <Prompt type="button" aria-label="最近使用的命令">
            <Icon s={15} h={14}><rect width="15" height="14" rx="2" fill="#c3c5c7" stroke="#a8a8a8" /><path d="M3 3l4 4-4 4M8 11h4" stroke="#6c7074" strokeWidth="1.400" /></Icon>
            <Icon s={6} h={4}><path d="M0 0h6L3 4z" fill="#777" /></Icon>
          </Prompt>
          <CommandInput aria-label="命令" placeholder="键入命令" />
        </CommandBar>
      </Workspace>
      <StatusBar>
        <LayoutTab type="button" $active>模型</LayoutTab>
        <LayoutTab type="button">布局1</LayoutTab>
        <LayoutTab type="button">布局2</LayoutTab>
        <AddTab $flip type="button" aria-label="新布局"><Plus /></AddTab>
        <StatusTools>
          <StatusButton $w={32} $divide>模型</StatusButton>
          <StatusButton $w={26} aria-label="栅格"><Icon><rect width="16" height="16" fill="#2464ad" /><path d="M1.500 0v16M5.500 0v16M10 0v16M14 0v16" stroke="#3c97f5" strokeWidth="2" /></Icon></StatusButton>
          <StatusButton $w={23} aria-label="捕捉"><Icon><path d="M1.500 0v16M5 0v16M8.500 0v16M12 0v16M15 0v16" stroke="#9c9c9c" strokeDasharray="1 2" /></Icon></StatusButton>
          <StatusButton $w={18} aria-label="捕捉选项" $divide><CaretMark $big /></StatusButton>
          <StatusButton $w={28} aria-label="正交"><Icon s={14}><path d="M1 0v13h13M1 8h5v5" stroke="#d2d2d2" strokeWidth="1.400" /></Icon></StatusButton>
          <StatusButton $w={22} aria-label="极轴"><Icon><circle cx="8" cy="8" r="6.500" stroke="#2f8df0" strokeWidth="2.200" /><path d="M8 8l6-5M8 8h5" stroke="#2f8df0" strokeWidth="1.600" /></Icon></StatusButton>
          <StatusMenu $w={14} aria-label="自定义状态栏"><Icon s={12}><path d="M2 1h10M2 6h10M2 11h10" stroke="#e0e0e0" strokeWidth="1.500" /></Icon></StatusMenu>
        </StatusTools>
      </StatusBar>

      <VideoMark>
        <MarkLead>秒</MarkLead>
        <MarkLatin>d</MarkLatin>
        <MarkPlay width="24" height="48" viewBox="0 0 24 48" aria-hidden="true">
          <circle cx="13" cy="33" r="15" fill="#353535" />
          <path d="M13 10l3 5 7-5" fill="none" stroke="#353535" strokeWidth="9" />
          <circle cx="13" cy="33" r="12" fill="#3a82ec" />
          <path d="M9 26l11 7-11 7z" fill="#ffffff" />
          <path d="M13 9l3 5 7-4" fill="none" stroke="#f7e52c" strokeWidth="3.500" />
        </MarkPlay>
        <MarkLatin>ng</MarkLatin>
        <span>视频</span>
      </VideoMark>

      <SiteShadow />
      <SiteCard>
        <CityLogo />
        <SiteText>
          <SiteName>土木工程网</SiteName>
          <SiteUrl href="#">www.civilcn.com</SiteUrl>
        </SiteText>
      </SiteCard>
    </Page>
  );
}
